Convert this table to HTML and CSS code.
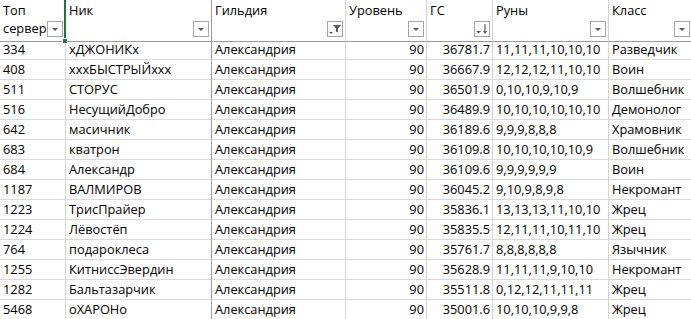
FILE: index.html
```html
<!DOCTYPE html>
<html lang="ru">
<head>
<meta charset="utf-8">
<title>Топ сервер</title>
<link rel="stylesheet" href="styles.css">
</head>
<body>
<div class="sheet">
  <div class="row head">
    <div class="cell hcell sel"><span class="htext">Топ<br>сервер</span><span class="fbtn"><svg viewBox="0 0 14 14" width="14" height="14"><path d="M4 6h6l-3 3z" fill="#595959"/></svg></span><span class="handle"></span></div>
    <div class="cell hcell frz"><span class="htext">Ник</span><span class="fbtn"><svg viewBox="0 0 14 14" width="14" height="14"><path d="M4 6h6l-3 3z" fill="#595959"/></svg></span></div>
    <div class="cell hcell"><span class="htext">Гильдия</span><span class="fbtn"><svg viewBox="0 0 14 14" width="14" height="14"><path d="M1 10h4l-2 2z" fill="#595959"/><path d="M5 3h8l-3 3.5v4l-2-1v-3z" fill="#595959"/></svg></span></div>
    <div class="cell hcell"><span class="htext">Уровень</span><span class="fbtn"><svg viewBox="0 0 14 14" width="14" height="14"><path d="M4 6h6l-3 3z" fill="#595959"/></svg></span></div>
    <div class="cell hcell"><span class="htext">ГС</span><span class="fbtn"><svg viewBox="0 0 14 14" width="14" height="14"><path d="M1 9h5l-2.5 2.5z" fill="#595959"/><path d="M10 2v9" stroke="#595959" stroke-width="1.2"/><path d="M8 9l2 3l2-3z" fill="#595959"/></svg></span></div>
    <div class="cell hcell"><span class="htext">Руны</span><span class="fbtn"><svg viewBox="0 0 14 14" width="14" height="14"><path d="M4 6h6l-3 3z" fill="#595959"/></svg></span></div>
    <div class="cell hcell"><span class="htext">Класс</span><span class="fbtn"><svg viewBox="0 0 14 14" width="14" height="14"><path d="M4 6h6l-3 3z" fill="#595959"/></svg></span></div>
  </div>
  <div class="row"><div class="cell">334</div><div class="cell frz">хДЖОНИКх</div><div class="cell">Александрия</div><div class="cell num">90</div><div class="cell num">36781.7</div><div class="cell">11,11,11,10,10,10</div><div class="cell">Разведчик</div></div>
  <div class="row"><div class="cell">408</div><div class="cell frz">хххБЫСТРЫЙххх</div><div class="cell">Александрия</div><div class="cell num">90</div><div class="cell num">36667.9</div><div class="cell">12,12,12,11,10,10</div><div class="cell">Воин</div></div>
  <div class="row"><div class="cell">511</div><div class="cell frz">СТОРУС</div><div class="cell">Александрия</div><div class="cell num">90</div><div class="cell num">36501.9</div><div class="cell">0,10,10,9,10,9</div><div class="cell">Волшебник</div></div>
  <div class="row"><div class="cell">516</div><div class="cell frz">НесущийДобро</div><div class="cell">Александрия</div><div class="cell num">90</div><div class="cell num">36489.9</div><div class="cell">10,10,10,10,10,10</div><div class="cell">Демонолог</div></div>
  <div class="row"><div class="cell">642</div><div class="cell frz">масичник</div><div class="cell">Александрия</div><div class="cell num">90</div><div class="cell num">36189.6</div><div class="cell">9,9,9,8,8,8</div><div class="cell">Храмовник</div></div>
  <div class="row"><div class="cell">683</div><div class="cell frz">кватрон</div><div class="cell">Александрия</div><div class="cell num">90</div><div class="cell num">36109.8</div><div class="cell">10,10,10,10,10,9</div><div class="cell">Волшебник</div></div>
  <div class="row"><div class="cell">684</div><div class="cell frz">Александр</div><div class="cell">Александрия</div><div class="cell num">90</div><div class="cell num">36109.6</div><div class="cell">9,9,9,9,9,9</div><div class="cell">Воин</div></div>
  <div class="row"><div class="cell">1187</div><div class="cell frz">ВАЛМИРОВ</div><div class="cell">Александрия</div><div class="cell num">90</div><div class="cell num">36045.2</div><div class="cell">9,10,9,8,9,8</div><div class="cell">Некромант</div></div>
  <div class="row"><div class="cell">1223</div><div class="cell frz">ТрисПрайер</div><div class="cell">Александрия</div><div class="cell num">90</div><div class="cell num">35836.1</div><div class="cell">13,13,13,11,10,10</div><div class="cell">Жрец</div></div>
  <div class="row"><div class="cell">1224</div><div class="cell frz">Лёвостёп</div><div class="cell">Александрия</div><div class="cell num">90</div><div class="cell num">35835.5</div><div class="cell">12,11,11,10,11,10</div><div class="cell">Жрец</div></div>
  <div class="row"><div class="cell">764</div><div class="cell frz">подароклеса</div><div class="cell">Александрия</div><div class="cell num">90</div><div class="cell num">35761.7</div><div class="cell">8,8,8,8,8,8</div><div class="cell">Язычник</div></div>
  <div class="row"><div class="cell">1255</div><div class="cell frz">КитниссЭвердин</div><div class="cell">Александрия</div><div class="cell num">90</div><div class="cell num">35628.9</div><div class="cell">11,11,11,9,10,10</div><div class="cell">Некромант</div></div>
  <div class="row"><div class="cell">1282</div><div class="cell frz">Бальтазарчик</div><div class="cell">Александрия</div><div class="cell num">90</div><div class="cell num">35511.8</div><div class="cell">0,12,12,11,11,11</div><div class="cell">Жрец</div></div>
  <div class="row"><div class="cell">5468</div><div class="cell frz">оХАРОНо</div><div class="cell">Александрия</div><div class="cell num">90</div><div class="cell num">35001.6</div><div class="cell">10,10,10,9,9,8</div><div class="cell">Жрец</div></div>
</div>
</body>
</html>
```

FILE: styles.css
```css
* { box-sizing: border-box; }
html, body {
  margin: 0;
  padding: 0;
  background: #fff;
  overflow: hidden;
}
.sheet {
  width: 693px;
  font-family: "Open Sans", "Liberation Sans", sans-serif;
  font-size: 12.8px;
  color: #000;
}
.row {
  display: grid;
  grid-template-columns: 66px 146px 134px 81px 66px 116px 84px;
  height: 20px;
}
.cell {
  border-right: 1px solid #d4d4d4;
  border-bottom: 1px solid #dadada;
  padding: 0 3px;
  line-height: 19px;
  white-space: nowrap;
  overflow: hidden;
}
.cell.frz { border-right-color: #9a9a9a; }
.num { text-align: right; padding-right: 2px; }
.row.head { height: 40px; }
.hcell {
  position: relative;
  display: flex;
  justify-content: space-between;
  align-items: flex-start;
  border-bottom: 1px solid #9a9a9a;
  padding: 2px 2px 4px 3px;
  line-height: 17.5px;
  overflow: visible;
}
.fbtn {
  align-self: flex-end;
  flex: none;
  width: 16px;
  height: 16px;
  border: 1px solid #a6a6a6;
  background: #fff;
  display: flex;
  align-items: center;
  justify-content: center;
}
.fbtn svg { display: block; }
.hcell.sel { border-right: 2px solid #217346; }
.handle {
  position: absolute;
  right: -4px;
  bottom: -3px;
  width: 6px;
  height: 6px;
  background: #217346;
  border: 1px solid #fff;
}
```
